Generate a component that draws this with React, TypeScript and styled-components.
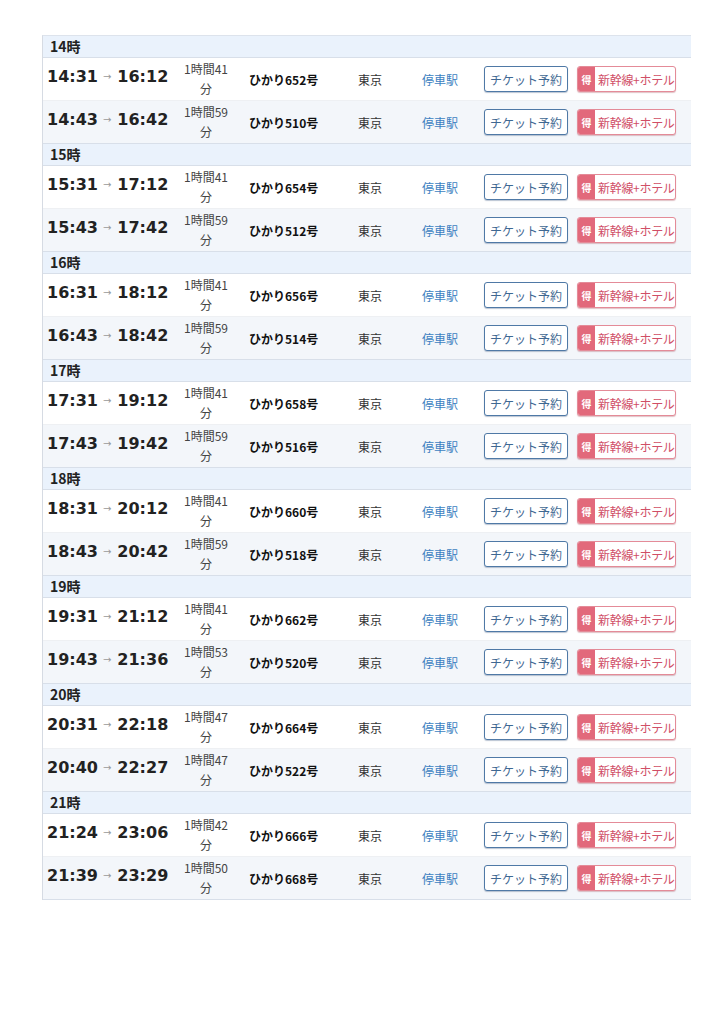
import React from "react";
import styled, { createGlobalStyle } from "styled-components";

const GlobalStyle = createGlobalStyle`
  body {
    margin: 0;
    background: #fff;
    font-family: "Noto Sans CJK JP", "Noto Sans", sans-serif;
    color: #333;
  }
`;

interface ITrain {
  dep: string;
  arr: string;
  dur: string;
  name: string;
}

interface IHour {
  hour: string;
  trains: ITrain[];
}

const schedule: IHour[] = [
  { hour: "14時", trains: [
    { dep: "14:31", arr: "16:12", dur: "41", name: "ひかり652号" },
    { dep: "14:43", arr: "16:42", dur: "59", name: "ひかり510号" },
  ] },
  { hour: "15時", trains: [
    { dep: "15:31", arr: "17:12", dur: "41", name: "ひかり654号" },
    { dep: "15:43", arr: "17:42", dur: "59", name: "ひかり512号" },
  ] },
  { hour: "16時", trains: [
    { dep: "16:31", arr: "18:12", dur: "41", name: "ひかり656号" },
    { dep: "16:43", arr: "18:42", dur: "59", name: "ひかり514号" },
  ] },
  { hour: "17時", trains: [
    { dep: "17:31", arr: "19:12", dur: "41", name: "ひかり658号" },
    { dep: "17:43", arr: "19:42", dur: "59", name: "ひかり516号" },
  ] },
  { hour: "18時", trains: [
    { dep: "18:31", arr: "20:12", dur: "41", name: "ひかり660号" },
    { dep: "18:43", arr: "20:42", dur: "59", name: "ひかり518号" },
  ] },
  { hour: "19時", trains: [
    { dep: "19:31", arr: "21:12", dur: "41", name: "ひかり662号" },
    { dep: "19:43", arr: "21:36", dur: "53", name: "ひかり520号" },
  ] },
  { hour: "20時", trains: [
    { dep: "20:31", arr: "22:18", dur: "47", name: "ひかり664号" },
    { dep: "20:40", arr: "22:27", dur: "47", name: "ひかり522号" },
  ] },
  { hour: "21時", trains: [
    { dep: "21:24", arr: "23:06", dur: "42", name: "ひかり666号" },
    { dep: "21:39", arr: "23:29", dur: "50", name: "ひかり668号" },
  ] },
];

const Page = styled.div`
  padding: 35px 34px 0 42px;
`;

const Table = styled.div`
  width: 648px;
  border-left: 1px solid #d6dbe3;
  border-top: 1px solid #dde3ec;
`;

const HourRow = styled.div`
  height: 21px;
  background: #eaf2fc;
  border-bottom: 1px solid #d8dfe9;
  padding-left: 7px;
  font-size: 14px;
  font-weight: 700;
  line-height: 21px;
  color: #222;
`;

const Row = styled.div<{ $alt?: boolean }>`
  display: grid;
  grid-template-columns: 137px 52px 126px 64px 62px 93px 1fr;
  align-items: center;
  height: 42px;
  background: ${(p) => (p.$alt ? "#f3f6fa" : "#fff")};
  border-bottom: 1px solid ${(p) => (p.$alt ? "#d8dfe9" : "#eef0f3")};
`;

const Times = styled.div`
  display: flex;
  align-items: center;
  padding-left: 4px;
  font-family: "DejaVu Sans", "Noto Sans CJK JP", sans-serif;
  font-size: 16px;
  font-weight: 700;
  color: #222;
  margin-top: -6px;
`;

const Arrow = styled.span`
  font-size: 10px;
  font-weight: 400;
  color: #999;
  margin: 0 6px 0 5px;
`;

const Duration = styled.div`
  text-align: center;
  font-size: 12px;
  line-height: 20px;
  color: #444;
`;

const TrainName = styled.div`
  padding-left: 17px;
  font-size: 12px;
  font-weight: 700;
  color: #111;
`;

const Station = styled.div`
  font-size: 12px;
  color: #333;
`;

const StopLink = styled.a`
  font-size: 12px;
  color: #3d7fc1;
  text-decoration: none;
`;

const TicketButton = styled.button`
  box-sizing: border-box;
  width: 84px;
  height: 26px;
  padding: 0;
  border: 1px solid #4f79a6;
  border-radius: 3px;
  background: #fff;
  box-shadow: 0 1px 1px rgba(60, 90, 130, 0.35);
  font-family: "Noto Sans CJK JP", sans-serif;
  font-size: 12px;
  color: #3f6892;
`;

const HotelButton = styled.button`
  box-sizing: border-box;
  display: flex;
  align-items: stretch;
  width: 99px;
  height: 26px;
  padding: 0;
  border: 1px solid #e48b98;
  border-radius: 3px;
  background: #fff;
  box-shadow: 0 1px 1px rgba(170, 80, 95, 0.35);
  overflow: hidden;
  font-family: "Noto Sans CJK JP", sans-serif;
`;

const Badge = styled.span`
  display: flex;
  align-items: center;
  justify-content: center;
  width: 17px;
  background: #e2697b;
  color: #fff;
  font-size: 10px;
  font-weight: 700;
`;

const HotelText = styled.span`
  display: flex;
  align-items: center;
  padding-left: 3px;
  font-size: 12px;
  color: #d04e66;
  letter-spacing: -0.3px;
`;

function TrainRow({ train, alt }: { train: ITrain; alt?: boolean }) {
  return (
    <Row $alt={alt}>
      <Times>
        {train.dep}
        <Arrow>→</Arrow>
        {train.arr}
      </Times>
      <Duration>
        1時間{train.dur}
        <br />
        分
      </Duration>
      <TrainName>{train.name}</TrainName>
      <Station>東京</Station>
      <StopLink href="#">停車駅</StopLink>
      <div>
        <TicketButton>チケット予約</TicketButton>
      </div>
      <div>
        <HotelButton>
          <Badge>得</Badge>
          <HotelText>新幹線+ホテル</HotelText>
        </HotelButton>
      </div>
    </Row>
  );
}

export default function App() {
  return (
    <>
      <GlobalStyle />
      <Page>
        <Table>
          {schedule.map((h) => (
            <React.Fragment key={h.hour}>
              <HourRow>{h.hour}</HourRow>
              {h.trains.map((t, i) => (
                <TrainRow key={t.name} train={t} alt={i % 2 === 1} />
              ))}
            </React.Fragment>
          ))}
        </Table>
      </Page>
    </>
  );
}
